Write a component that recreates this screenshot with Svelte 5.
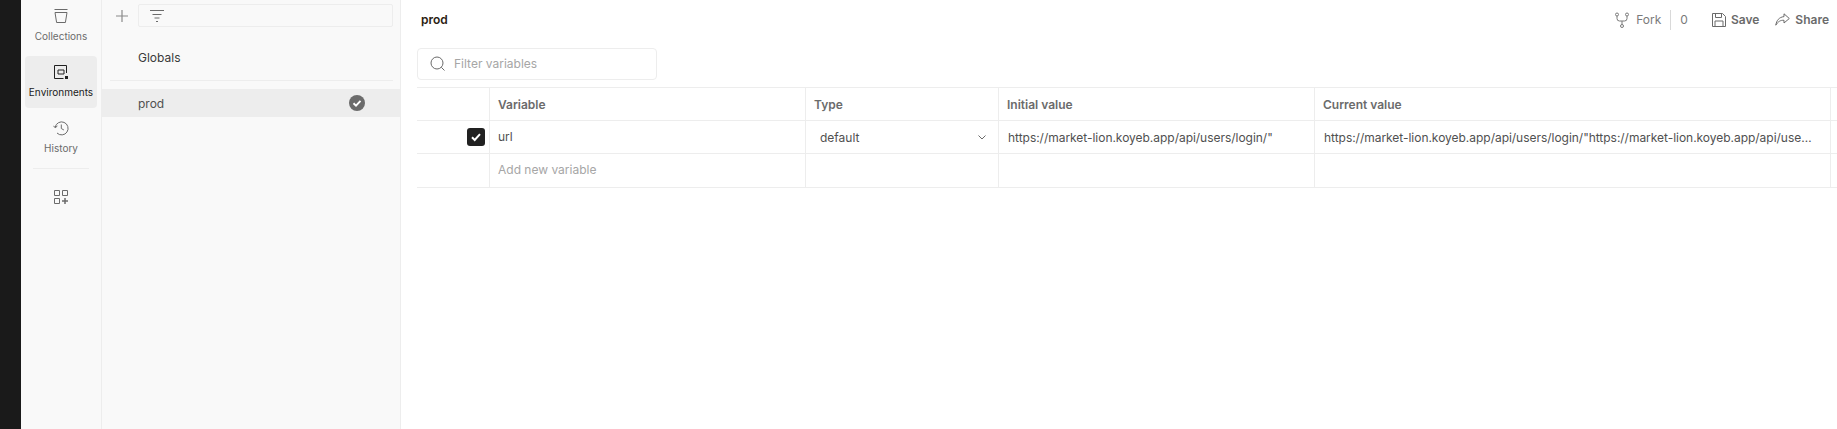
<script>
  const railItems = [
    { label: 'Collections', icon: 'bucket' },
    { label: 'Environments', icon: 'env', active: true },
    { label: 'History', icon: 'history' }
  ];
  const longValue = 'https://market-lion.koyeb.app/api/users/login/"https://market-lion.koyeb.app/api/users/login/"';
</script>

<div class="page">
  <div class="edge"></div>

  <nav class="rail">
    {#each railItems as item}
      <div class="rail-item" class:active={item.active}>
        <svg width="16" height="16" viewBox="0 0 16 16" fill="none" stroke="currentColor" stroke-width="1">
          {#if item.icon === 'bucket'}
            <path d="M1.5 1.5h13M2 4.500h12l-1.600 10h-8.800z" />
          {:else if item.icon === 'env'}
            <path d="M13.500 9V1.500h-12v13h9" />
            <path d="M5 6h6v4H5z" />
            <rect x="12" y="12" width="3" height="3" fill="currentColor" stroke="none" />
          {:else}
            <path d="M2.200 7.200A6.500 6.500 0 1 1 4 13" />
            <path d="M0.500 5.800 2.200 7.800 4.400 6M8.300 4.500v4l2.600 1.500" />
          {/if}
        </svg>
        <span>{item.label}</span>
      </div>
    {/each}
    <div class="rail-divider"></div>
    <svg class="apps" width="16" height="16" viewBox="0 0 16 16" fill="none" stroke="currentColor" stroke-width="1">
      <path d="M1.500 1.500h5v5h-5zM9.500 1.500h5v5h-5zM1.500 9.500h5v5h-5z" />
      <path d="M12 9v6M9 12h6" stroke-width="1.500" />
    </svg>
  </nav>

  <aside class="list">
    <div class="list-top">
      <svg class="plus" width="14" height="14" viewBox="0 0 14 14" stroke="currentColor" stroke-width="1.200">
        <path d="M7 1v12M1 7h12" />
      </svg>
      <div class="list-filter">
        <svg width="14" height="12" viewBox="0 0 14 12" stroke="currentColor" stroke-width="1">
          <path d="M0 .5h14M2.500 4.500h9M4.500 8h5M6 11.500h2" />
        </svg>
      </div>
    </div>
    <div class="globals">Globals</div>
    <div class="list-divider"></div>
    <div class="env-row">
      <span>prod</span>
      <svg width="16" height="16" viewBox="0 0 16 16">
        <circle cx="8" cy="8" r="8" fill="#6b6b6b" />
        <path d="M4.500 8.200 7 10.600 11.500 5.800" fill="none" stroke="#fff" stroke-width="1.900" />
      </svg>
    </div>
  </aside>

  <main class="main">
    <header class="head">
      <h1>prod</h1>
      <div class="actions">
        <span class="fork">
          <svg width="14" height="16" viewBox="0 0 14 16" fill="none" stroke="currentColor" stroke-width="1">
            <circle cx="2" cy="2.500" r="1.500" />
            <circle cx="12" cy="2.500" r="1.500" />
            <circle cx="7" cy="14" r="1.500" />
            <path d="M2 4v2.500Q2 9 4.500 9h5Q12 9 12 6.500V4M7 9v3.500" />
          </svg>
          Fork
        </span>
        <span class="count">0</span>
        <span class="action save">
          <svg width="14" height="14" viewBox="0 0 14 14" fill="none" stroke="currentColor" stroke-width="1">
            <path d="M.5.5h10l3 3v10H.5z" />
            <path d="M3.500.5v4h6v-4M3 13.500V8h8v5.500" />
          </svg>
          Save
        </span>
        <span class="action">
          <svg width="15" height="13" viewBox="0 0 15 13" fill="none" stroke="currentColor" stroke-width="1">
            <path d="M9 .8 14.300 5.500 9 10V7.300C5.500 7 3 8.500 .8 12.200 1.500 7.500 4 4.200 9 3.600z" />
          </svg>
          Share
        </span>
      </div>
    </header>

    <div class="search">
      <svg width="15" height="15" viewBox="0 0 15 15" fill="none" stroke="#6b6b6b" stroke-width="1">
        <circle cx="7" cy="7" r="6" />
        <path d="M11.300 11.300 14.500 14.500" />
      </svg>
      <span>Filter variables</span>
    </div>

    <div class="table">
      <div class="row header">
        <div class="cell check"></div>
        <div class="cell">Variable</div>
        <div class="cell">Type</div>
        <div class="cell initial">Initial value</div>
        <div class="cell">Current value</div>
      </div>
      <div class="row">
        <div class="cell check">
          <span class="box">
            <svg width="12" height="12" viewBox="0 0 12 12">
              <path d="M2 6.300 4.700 9 10 3.200" fill="none" stroke="#fff" stroke-width="2" />
            </svg>
          </span>
        </div>
        <div class="cell name">url</div>
        <div class="cell type">
          default
          <svg width="8" height="5" viewBox="0 0 8 5" fill="none" stroke="#6b6b6b" stroke-width="1">
            <path d="M.5.5 4 4 7.500.5" />
          </svg>
        </div>
        <div class="cell initial value">https://market-lion.koyeb.app/api/users/login/"</div>
        <div class="cell value"><span class="clip">{longValue}</span></div>
      </div>
      <div class="row last">
        <div class="cell check"></div>
        <div class="cell muted">Add new variable</div>
        <div class="cell"></div>
        <div class="cell"></div>
        <div class="cell"></div>
      </div>
    </div>
  </main>
</div>

<style>
  :global(body) {
    margin: 0;
    background: #fff;
  }

  .page {
    display: flex;
    height: 429px;
    overflow: hidden;
    font-family: Inter, "Noto Sans", sans-serif;
    font-size: 12px;
    color: #212121;
  }

  .edge {
    width: 21px;
    flex: none;
    background: #1a1a1a;
  }

  .rail {
    width: 81px;
    flex: none;
    display: flex;
    flex-direction: column;
    align-items: center;
    gap: 4px;
    box-sizing: border-box;
    background: #f9f9f9;
    border-right: 1px solid #ededed;
    color: #6b6b6b;
  }

  .rail-item {
    width: 72px;
    height: 52px;
    flex: none;
    box-sizing: border-box;
    padding-top: 8px;
    display: flex;
    flex-direction: column;
    align-items: center;
    gap: 5px;
    border-radius: 4px;
    font-size: 10px;
    line-height: 14px;
  }

  .rail-item.active {
    background: #ededed;
    color: #212121;
  }

  .rail-item:last-of-type {
    margin-top: 1px;
    height: 51px;
  }

  .rail-divider {
    width: 56px;
    height: 1px;
    background: #ededed;
  }

  .apps {
    margin-top: 16px;
  }

  .list {
    width: 299px;
    flex: none;
    box-sizing: border-box;
    background: #f9f9f9;
    border-right: 1px solid #ededed;
  }

  .list-top {
    display: flex;
    align-items: center;
    gap: 9px;
    height: 23px;
    padding: 4px 7px 0 13px;
    color: #8a8a8a;
  }

  .list-filter {
    flex: 1;
    height: 23px;
    box-sizing: border-box;
    padding: 5px 11px;
    border: 1px solid #ededed;
    border-radius: 2px;
    line-height: 0;
    color: #6b6b6b;
  }

  .globals {
    height: 53px;
    box-sizing: border-box;
    padding: 24px 0 0 36px;
    line-height: 14px;
    color: #3a3a3a;
  }

  .list-divider {
    height: 1px;
    margin: 0 7px 0 8px;
    background: #ededed;
  }

  .env-row {
    display: flex;
    justify-content: space-between;
    align-items: center;
    height: 28px;
    margin-top: 8px;
    padding: 0 35px 0 36px;
    background: #ededed;
    color: #505050;
  }

  .main {
    flex: 1;
    min-width: 0;
    padding: 0 0 0 16px;
  }

  .head {
    height: 39px;
    display: flex;
    justify-content: space-between;
    align-items: center;
    padding: 0 8px 0 4px;
  }

  h1 {
    margin: 0;
    font-size: 12px;
    font-weight: 600;
    color: #2b1d12;
  }

  .actions {
    display: flex;
    align-items: center;
    color: #6b6b6b;
    font-weight: 600;
  }

  .fork {
    display: flex;
    align-items: center;
    gap: 7px;
    padding-right: 9px;
    border-right: 1px solid #d9d9d9;
    font-weight: 400;
    color: #7a7a7a;
    line-height: 20px;
  }

  .count {
    margin: 0 24px 0 9px;
    font-weight: 400;
    color: #7a7a7a;
  }

  .action {
    display: flex;
    align-items: center;
    gap: 5px;
  }

  .save {
    margin-right: 16px;
  }

  .search {
    width: 240px;
    height: 32px;
    margin-top: 9px;
    box-sizing: border-box;
    display: flex;
    align-items: center;
    gap: 9px;
    padding: 0 0 1px 12px;
    border: 1px solid #ededed;
    border-radius: 4px;
    color: #a6a6a6;
  }

  .table {
    margin-top: 7px;
    border-top: 1px solid #ededed;
  }

  .row {
    display: grid;
    grid-template-columns: 73px 316px 193px 316px 1fr;
    border-bottom: 1px solid #ededed;
  }

  .cell {
    height: 32px;
    display: flex;
    align-items: center;
    box-sizing: border-box;
    padding-left: 8px;
    border-right: 1px solid #ededed;
    min-width: 0;
    color: #505050;
  }

  .cell:last-child {
    margin-right: 6px;
  }

  .header .cell {
    font-weight: 600;
    color: #6b6b6b;
  }

  .last .cell {
    height: 33px;
    padding-bottom: 2px;
  }

  .check {
    justify-content: flex-end;
    padding: 0 4px 0 0;
  }

  .box {
    width: 18px;
    height: 18px;
    display: flex;
    align-items: center;
    justify-content: center;
    border-radius: 3px;
    background: #212121;
  }

  .name {
    padding-bottom: 2px;
  }

  .type {
    justify-content: space-between;
    padding: 0 12px 0 14px;
  }

  .value {
    padding-left: 9px;
    color: #505050;
    letter-spacing: -0.03px;
  }

  .clip {
    width: 491px;
    overflow: hidden;
    white-space: nowrap;
    text-overflow: ellipsis;
  }

  .muted {
    color: #a6a6a6;
  }
</style>
